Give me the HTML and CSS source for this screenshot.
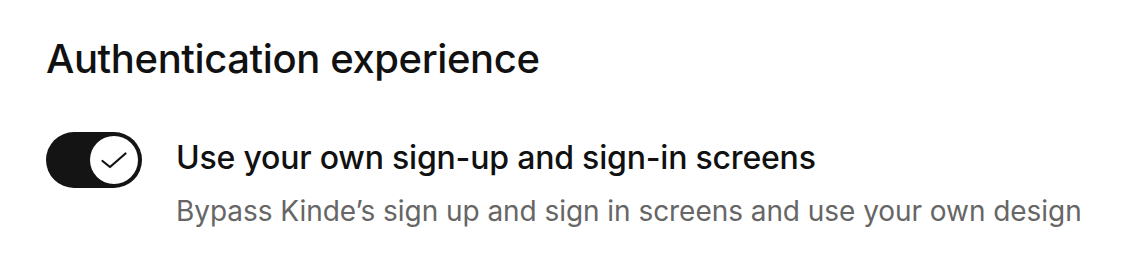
FILE: index.html
```html
<!DOCTYPE html>
<html lang="en">
<head>
<meta charset="UTF-8">
<title>Authentication experience</title>
<link rel="stylesheet" href="styles.css">
</head>
<body>

<section class="settings-section">
  <h2 class="section-title">Authentication experience</h2>

  <div class="toggle-row">
    <button class="toggle is-on" role="switch" aria-checked="true">
      <span class="toggle-knob">
        <svg viewBox="0 0 28 28" width="28" height="28" fill="none" stroke="#111" stroke-width="2.2" stroke-linecap="round" stroke-linejoin="round">
          <path d="M2.5 15L10 21L25.5 7.5"/>
        </svg>
      </span>
    </button>
    <div class="toggle-text">
      <p class="toggle-label">Use your own sign-up and sign-in screens</p>
      <p class="toggle-desc">Bypass Kinde’s sign up and sign in screens and use your own design</p>
    </div>
  </div>
</section>

</body>
</html>
```

FILE: styles.css
```css
body {
  font-family: 'Inter', 'Noto Sans', sans-serif;
  margin: 0;
  padding: 0;
  background-color: #fff;
  color: #111;
}
.settings-section {
  padding: 35px 46px;
}
.section-title {
  margin: 0 0 49px 0;
  font-size: 40px;
  font-weight: 500;
  line-height: 48px;
  letter-spacing: -0.4px;
}
.toggle-row {
  display: flex;
  align-items: flex-start;
  gap: 34px;
}
.toggle {
  flex: none;
  width: 96px;
  height: 56px;
  padding: 4px;
  border: none;
  border-radius: 28px;
  background-color: #141414;
  display: flex;
  justify-content: flex-end;
  cursor: pointer;
}
.toggle-knob {
  width: 48px;
  height: 48px;
  border-radius: 50%;
  background-color: #fff;
  display: flex;
  align-items: center;
  justify-content: center;
}
.toggle-text {
  flex: 1;
  min-width: 0;
}
.toggle-text p {
  margin: 0;
  white-space: nowrap;
}
.toggle-text .toggle-label {
  margin-top: 2px;
  font-size: 32px;
  font-weight: 500;
  line-height: 48px;
  letter-spacing: -0.2px;
}
.toggle-text .toggle-desc {
  margin-top: 9px;
  font-size: 28px;
  line-height: 40px;
  letter-spacing: -0.05px;
  color: #666;
}
```
